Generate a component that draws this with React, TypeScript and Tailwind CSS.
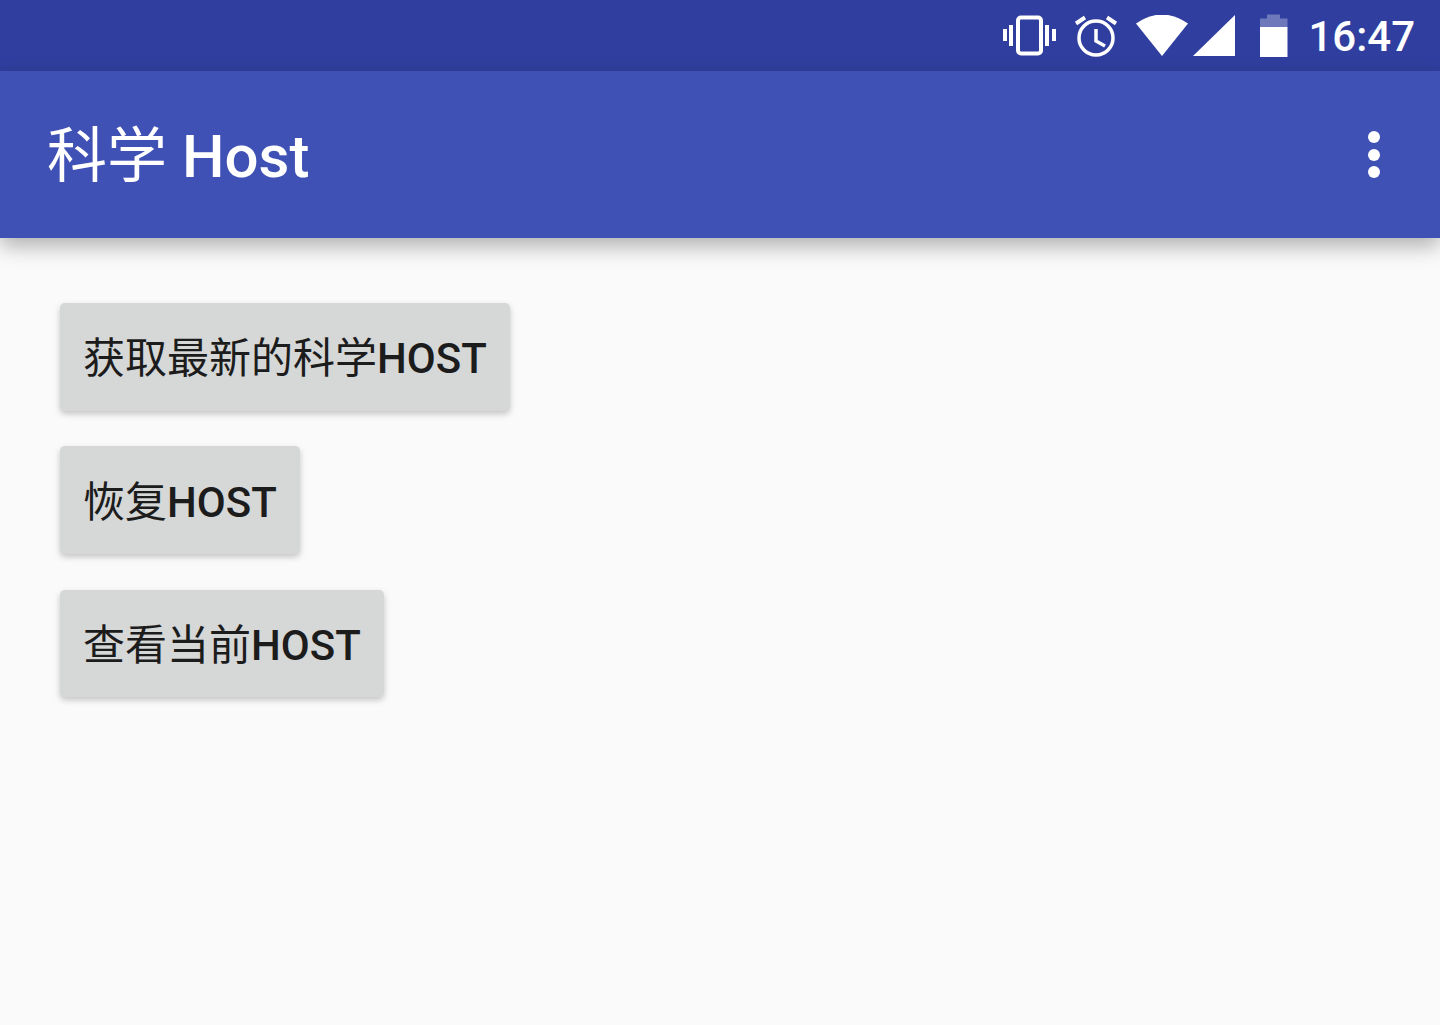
import React from "react";

const buttons: [string, string][] = [
  ["获取最新的科学", "HOST"],
  ["恢复", "HOST"],
  ["查看当前", "HOST"],
];

export default function App() {
  return (
    <div className="min-h-[1025px] bg-[#fafafa] font-['Roboto','Noto_Sans_CJK_SC',sans-serif]">
      <div className="h-[71px] bg-[#303f9f] flex items-center justify-end pr-[25px] text-white">
        <svg width="54" height="42" viewBox="0 0 54 42" className="block">
          <rect x="0" y="14" width="4" height="12" fill="#fff" />
          <rect x="6" y="10" width="4" height="21" fill="#fff" />
          <rect x="42" y="10" width="4" height="21" fill="#fff" />
          <rect x="49" y="14" width="4" height="12" fill="#fff" />
          <rect x="15" y="2.5" width="23" height="36" rx="3" fill="none" stroke="#fff" strokeWidth="4" />
        </svg>
        <svg width="44" height="44" viewBox="0 0 44 44" className="ml-[17px]">
          <circle cx="22" cy="24" r="17" fill="none" stroke="#fff" strokeWidth="3.5" />
          <path d="M22 15v12l9 5" fill="none" stroke="#fff" strokeWidth="3.5" />
          <path d="M2 9.5L11 3.5M42 9.5L33 3.5" stroke="#fff" strokeWidth="4" />
        </svg>
        <svg width="54" height="42" viewBox="0 0 54 42" className="ml-[17px]">
          <path d="M1 8.5Q27 -9.5 53 8.5L27 41Z" fill="#fff" />
        </svg>
        <svg width="42" height="42" viewBox="0 0 42 42" className="ml-[4px]">
          <path d="M42 0V41H0Z" fill="#fff" />
        </svg>
        <svg width="28" height="44" viewBox="0 0 28 44" className="ml-[25px]">
          <path d="M7 0.5h13v4h7.5v8.5H0V4.5h7z" fill="#fff" fillOpacity="0.3" />
          <path d="M0 13h27.5v30H0z" fill="#fff" />
        </svg>
        <span className="ml-[20px] pt-[3px] text-[42px] leading-none font-medium">16:47</span>
      </div>
      <div className="h-[167px] bg-[#3f51b5] shadow-[0_8px_20px_rgba(0,0,0,0.3)] flex items-center justify-between pl-[47px] pr-[60px] text-white">
        <span className="text-[60px] font-normal leading-none pt-[4px]">
          科学 <span className="font-medium">Host</span>
        </span>
        <div className="flex flex-col gap-[5.5px]">
          <span className="w-[12px] h-[12px] rounded-full bg-white" />
          <span className="w-[12px] h-[12px] rounded-full bg-white" />
          <span className="w-[12px] h-[12px] rounded-full bg-white" />
        </div>
      </div>
      <div className="flex flex-col items-start gap-[35.8px] pt-[65px] pl-[60px]">
        {buttons.map(([zh, en]) => (
          <button
            key={zh}
            className="h-[107.5px] pl-[23px] pr-[23px] pt-[4px] rounded-[5px] bg-[#d6d7d7] text-[#1c1c1c] text-[42px] font-normal shadow-[0_3px_6px_rgba(0,0,0,0.22)]"
          >
            {zh}
            <span className="font-medium">{en}</span>
          </button>
        ))}
      </div>
    </div>
  );
}
